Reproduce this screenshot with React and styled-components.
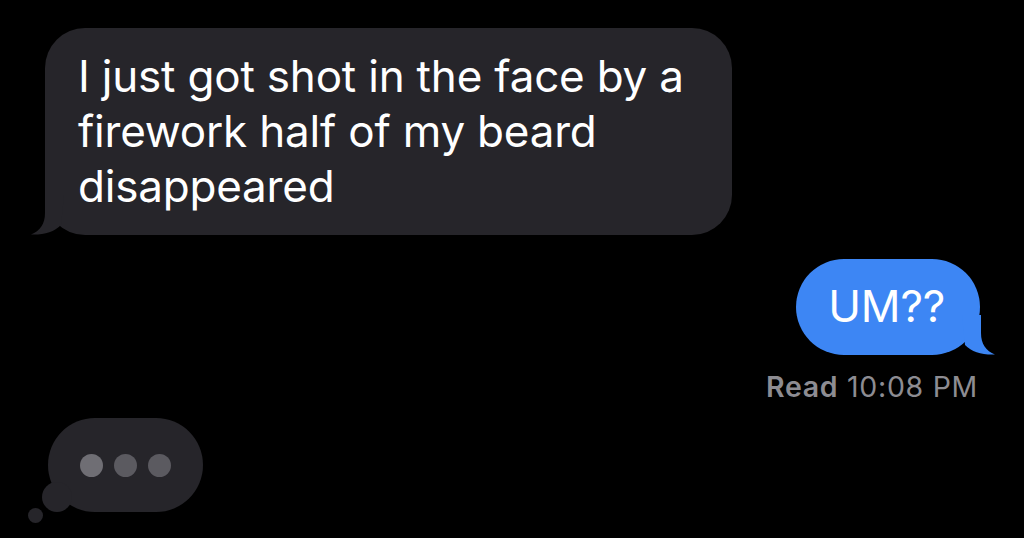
import React from 'react'
import styled, { createGlobalStyle } from 'styled-components'

const Global = createGlobalStyle`
  html, body {
    margin: 0;
    background: #000;
    font-family: Inter, "Noto Sans", "Liberation Sans", sans-serif;
  }
`

const GRAY = '#26252a'
const BLUE = '#3d86f4'

const Screen = styled.div`
  width: 1024px;
  height: 538px;
  overflow: hidden;
  background: #000;
  display: flex;
  flex-direction: column;
  padding: 28px 44px 0 45px;
  box-sizing: border-box;
`

const Row = styled.div`
  display: flex;
  justify-content: ${p => (p.$me ? 'flex-end' : 'flex-start')};
  margin-top: ${p => p.$gap || 0}px;
`

const Bubble = styled.div`
  position: relative;
  box-sizing: border-box;
  background: ${p => (p.$me ? BLUE : GRAY)};
  color: #fff;
  font-size: 44px;
  line-height: 55px;
  letter-spacing: -0.2px;
  border-radius: ${p => (p.$me ? 48 : 40)}px;
  ${p => p.$width && `width: ${p.$width}px;`}
  padding: ${p => (p.$me ? '20px 35px 21px 32px' : '21px 40px 21px 33px')};
`

const Tail = styled.svg`
  position: absolute;
  bottom: 0;
  ${p => (p.$right ? 'right: -16px; transform: scaleX(-1);' : 'left: -15px;')}
  width: 34px;
  height: 40px;
`

const Receipt = styled.div`
  align-self: flex-end;
  margin-top: 15px;
  margin-right: 2px;
  color: #8d8c92;
  font-size: 28.5px;
  line-height: 34px;
  letter-spacing: 0.7px;
  b {
    font-weight: 600;
  }
`

const Typing = styled.div`
  position: relative;
  margin-top: 14px;
  margin-left: 3px;
  width: 155px;
  height: 94px;
  border-radius: 47px;
  background: ${GRAY};
  display: flex;
  align-items: center;
  justify-content: center;
  gap: 11px;
`

const Dot = styled.span`
  width: 23px;
  height: 23px;
  border-radius: 50%;
  background: ${p => (p.$lit ? '#6f6e74' : '#5b5a60')};
`

const Puff = styled.span`
  position: absolute;
  border-radius: 50%;
  background: ${GRAY};
  width: ${p => p.$size}px;
  height: ${p => p.$size}px;
  left: ${p => p.$x}px;
  top: ${p => p.$y}px;
`

const TailShape = ({ color, right }) => (
  <Tail $right={right} viewBox="0 0 34 40">
    <path d="M15 0 L15 18 C15 29 10 36 1 39.5 C14 40 24 37 31 30 L34 0 Z" fill={color} />
  </Tail>
)

export default function App() {
  return (
    <>
      <Global />
      <Screen>
        <Row>
          <Bubble $width={687}>
            I just got shot in the face by a firework half of my beard disappeared
            <TailShape color={GRAY} />
          </Bubble>
        </Row>
        <Row $me $gap={24}>
          <Bubble $me>
            UM??
            <TailShape color={BLUE} right />
          </Bubble>
        </Row>
        <Receipt>
          <b>Read</b> 10:08 PM
        </Receipt>
        <Typing>
          <Dot $lit />
          <Dot />
          <Dot />
          <Puff $size={30} $x={-6} $y={64} />
          <Puff $size={15} $x={-20} $y={90} />
        </Typing>
      </Screen>
    </>
  )
}
